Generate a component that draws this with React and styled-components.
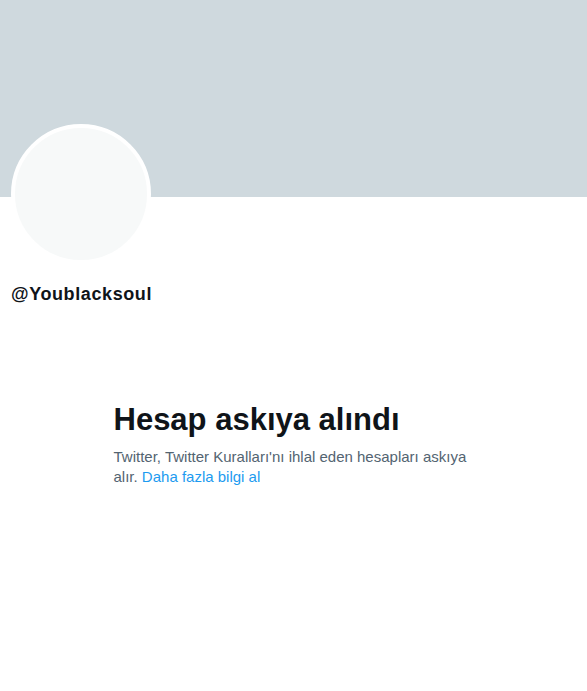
import React from 'react';
import styled, { createGlobalStyle } from 'styled-components';

const GlobalStyle = createGlobalStyle`
  body {
    margin: 0;
    background: #ffffff;
    font-family: "Liberation Sans", Arial, sans-serif;
  }
`;

const Page = styled.div`
  width: 587px;
  min-height: 691px;
  background: #ffffff;
`;

const Banner = styled.div`
  height: 197px;
  background-color: #cfd9de;
`;

const ProfileHead = styled.div`
  padding: 0 11px;
`;

const Avatar = styled.div`
  width: 132px;
  height: 132px;
  margin-top: -73px;
  border: 4px solid #ffffff;
  border-radius: 50%;
  background-color: #f7f9f9;
`;

const Handle = styled.div`
  margin-top: 19px;
  font-size: 18px;
  font-weight: 700;
  letter-spacing: 0.6px;
  line-height: 22px;
  color: #0f1419;
`;

const Empty = styled.div`
  width: 360px;
  margin: 97px auto 0;
`;

const Title = styled.h2`
  margin: 0 0 9px;
  font-size: 31px;
  font-weight: 700;
  line-height: 36px;
  color: #0f1419;
`;

const Body = styled.p`
  margin: 0;
  font-size: 15px;
  line-height: 20px;
  color: #536471;
`;

const MoreLink = styled.a`
  color: #1d9bf0;
  text-decoration: none;
`;

const App = () => (
  <React.Fragment>
    <GlobalStyle />
    <Page>
      <Banner />
      <ProfileHead>
        <Avatar />
        <Handle>@Youblacksoul</Handle>
      </ProfileHead>
      <Empty>
        <Title>Hesap askıya alındı</Title>
        <Body>
          Twitter, Twitter Kuralları'nı ihlal eden hesapları askıya alır.{' '}
          <MoreLink href="#">Daha fazla bilgi al</MoreLink>
        </Body>
      </Empty>
    </Page>
  </React.Fragment>
);

export default App;
